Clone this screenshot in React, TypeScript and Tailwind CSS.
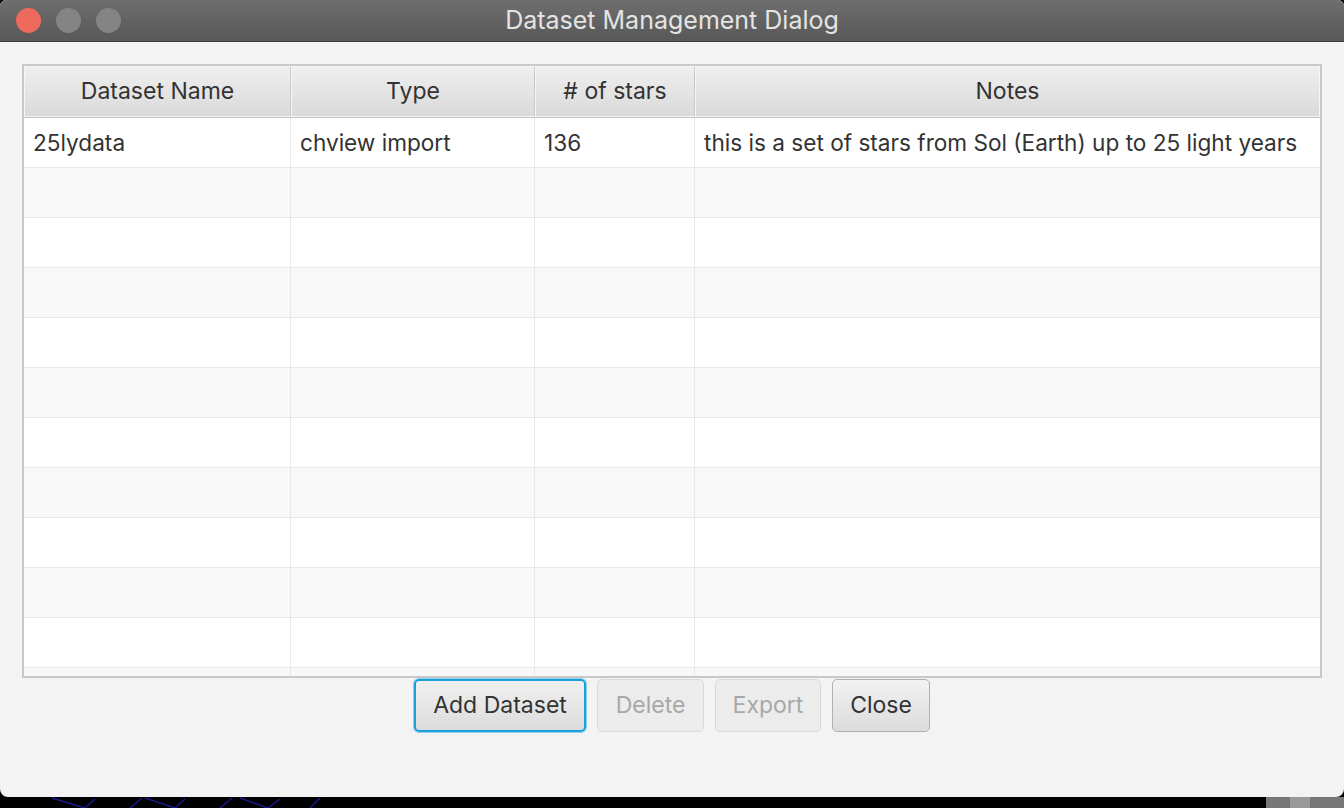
import React from "react";

const cols = ["w-[267px]", "w-[244px]", "w-[160px]", "flex-1"];
const headers = ["Dataset Name", "Type", "# of stars", "Notes"];
const rows: string[][] = [
  ["25lydata", "chview import", "136", "this is a set of stars from Sol (Earth) up to 25 light years"],
  ...Array.from({ length: 11 }, () => ["", "", "", ""]),
];

function TrafficLight({ color }: { color: string }) {
  return <div className={`w-[25px] h-[25px] rounded-full ${color}`} />;
}

export default function App() {
  return (
    <div className="w-[1344px] h-[808px] bg-black relative overflow-hidden font-['Inter','Liberation_Sans',sans-serif]">
      <svg className="absolute left-0 top-[790px]" width="1344" height="18">
        <g stroke="#1a1a8a" strokeWidth="1.5" fill="none">
          <path d="M52 798 L85 808 M95 799 L85 808" transform="translate(0,-790)" />
          <path d="M130 808 L142 798 M145 798 L175 808 L185 799" transform="translate(0,-790)" />
          <path d="M220 808 L232 798 M240 798 L268 808 L280 799" transform="translate(0,-790)" />
          <path d="M310 808 L320 798" transform="translate(0,-790)" />
        </g>
        <rect x="1266" y="7" width="78" height="11" fill="#777" />
        <rect x="1290" y="7" width="20" height="11" fill="#999" />
      </svg>
      <div className="relative w-[1344px] h-[797px] bg-[#f3f3f3] rounded-t-[6px] rounded-b-[8px] overflow-hidden flex flex-col">
        {/* title bar */}
        <div className="h-[42px] shrink-0 bg-gradient-to-b from-[#6e6e6e] to-[#585858] border-b border-[#3c3c3c] flex items-center relative">
          <div className="flex items-center gap-[15px] pl-[16px]">
            <TrafficLight color="bg-[#ee6a5e]" />
            <TrafficLight color="bg-[#848485]" />
            <TrafficLight color="bg-[#848485]" />
          </div>
          <div className="absolute inset-0 flex items-center justify-center text-[25px] text-[#e4e4e4] pt-[1px]">
            Dataset Management Dialog
          </div>
        </div>

        {/* table */}
        <div className="ml-[22px] mt-[22px] w-[1300px] h-[614px] border-2 border-[#c8c8c8] bg-white flex flex-col overflow-hidden">
          <div className="h-[52px] shrink-0 flex border-b border-[#c4c4c4]">
            {headers.map((h, i) => (
              <div
                key={h}
                className={`${cols[i]} h-full flex items-center justify-center text-[23px] text-[#333] bg-gradient-to-b from-[#efefef] to-[#dadada] border border-[#f6f6f6] ${i < 3 ? "border-r-[#c8c8c8]" : ""}`}
              >
                {h}
              </div>
            ))}
          </div>
          {rows.map((r, ri) => (
            <div
              key={ri}
              className={`h-[50px] shrink-0 flex border-b border-[#e8e8e8] ${ri % 2 === 0 ? "bg-white" : "bg-[#f8f8f8]"}`}
            >
              {r.map((c, ci) => (
                <div
                  key={ci}
                  className={`${cols[ci]} h-full flex items-center pl-[9px] text-[22.6px] text-[#333] whitespace-nowrap ${ci < 3 ? "border-r border-[#e8e8e8]" : ""}`}
                >
                  {c}
                </div>
              ))}
            </div>
          ))}
        </div>

        {/* buttons */}
        <div className="mt-[1px] flex justify-center gap-[11px]">
          <button className="w-[172px] h-[53px] rounded-[5px] border-2 border-[#1aa0da] bg-gradient-to-b from-[#f0f0f0] to-[#dcdcdc] text-[23px] text-[#333] shadow-[0_0_0_1px_#8fd0ee] whitespace-nowrap overflow-hidden">
            Add Dataset
          </button>
          <button className="w-[107px] h-[53px] rounded-[5px] border border-[#dadada] bg-[#ececec] text-[23px] text-[#a8a8a8]">
            Delete
          </button>
          <button className="w-[106px] h-[53px] rounded-[5px] border border-[#dadada] bg-[#ececec] text-[23px] text-[#a8a8a8]">
            Export
          </button>
          <button className="w-[98px] h-[53px] rounded-[5px] border border-[#b0b0b0] bg-gradient-to-b from-[#f2f2f2] to-[#dcdcdc] text-[23px] text-[#333]">
            Close
          </button>
        </div>
      </div>
    </div>
  );
}
